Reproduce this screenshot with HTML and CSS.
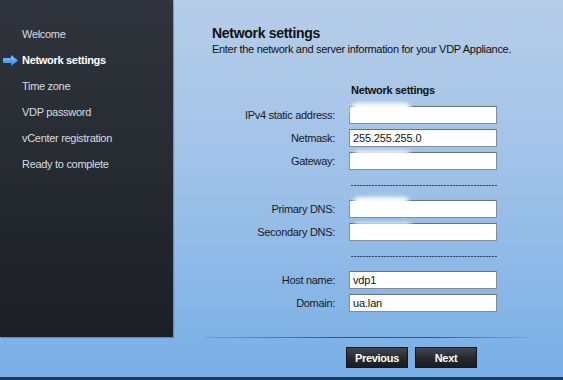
FILE: index.html
```html
<!DOCTYPE html>
<html>
<head>
<meta charset="utf-8">
<link rel="stylesheet" href="styles.css">
</head>
<body>
<div class="app">
  <div class="top">
    <nav class="sidebar">
      <div class="nav-item">Welcome</div>
      <div class="nav-item active">
        <svg class="arrow" width="15" height="11" viewBox="0 0 15 11">
          <defs>
            <linearGradient id="ag" x1="0" y1="0" x2="0" y2="1">
              <stop offset="0" stop-color="#8cc8ff"/>
              <stop offset="1" stop-color="#2f86e0"/>
            </linearGradient>
          </defs>
          <path d="M0 3 H8 V0 L15 5.5 L8 11 V8 H0 Z" fill="url(#ag)"/>
        </svg>
        Network settings
      </div>
      <div class="nav-item">Time zone</div>
      <div class="nav-item">VDP password</div>
      <div class="nav-item">vCenter registration</div>
      <div class="nav-item">Ready to complete</div>
    </nav>
    <main class="content">
      <h1 class="title">Network settings</h1>
      <p class="subtitle">Enter the network and server information for your VDP Appliance.</p>
      <div class="form">
        <div></div><div class="form-head">Network settings</div>
        <label class="lbl">IPv4 static address:</label>
        <div class="field"><input class="inp" value=""><span class="blot b1"></span></div>
        <label class="lbl">Netmask:</label>
        <div class="field"><input class="inp" value="255.255.255.0"></div>
        <label class="lbl">Gateway:</label>
        <div class="field"><input class="inp" value=""><span class="blot b2"></span></div>
        <div></div><div class="dash-row"><div class="dash"></div></div>
        <label class="lbl">Primary DNS:</label>
        <div class="field"><input class="inp" value=""><span class="blot b3"></span></div>
        <label class="lbl">Secondary DNS:</label>
        <div class="field"><input class="inp" value=""><span class="blot b4"></span></div>
        <div></div><div class="dash-row"><div class="dash"></div></div>
        <label class="lbl">Host name:</label>
        <div class="field"><input class="inp" value="vdp1"></div>
        <label class="lbl">Domain:</label>
        <div class="field"><input class="inp" value="ua.lan"></div>
      </div>
    </main>
  </div>
  <div class="sep"></div>
  <div class="footer">
    <button class="btn">Previous</button>
    <button class="btn">Next</button>
  </div>
  <div class="strip"></div>
</div>
</body>
</html>
```
FILE: styles.css
```css
html, body {
  margin: 0;
  padding: 0;
}
body {
  width: 563px;
  height: 380px;
  overflow: hidden;
  font-family: "Liberation Sans", Arial, sans-serif;
  font-size: 11px;
  letter-spacing: -0.3px;
}
.app {
  width: 563px;
  height: 380px;
  display: flex;
  flex-direction: column;
  background: linear-gradient(#b6cde8 0%, #a0c2e8 45%, #78aee6 100%);
}
.top {
  display: flex;
  height: 337px;
}
.sidebar {
  width: 173px;
  flex: none;
  height: 337px;
  box-sizing: border-box;
  padding-top: 21px;
  background: linear-gradient(#30353d, #1c1f25);
  box-shadow: 1px 1px 1px rgba(40, 60, 90, 0.35);
}
.nav-item {
  position: relative;
  height: 26px;
  line-height: 26px;
  padding-left: 22px;
  color: #d9dce0;
  font-size: 11px;
}
.nav-item.active {
  color: #ffffff;
  font-weight: bold;
}
.arrow {
  position: absolute;
  left: 3px;
  top: 8px;
}
.content {
  flex: 1;
  padding-left: 39px;
  color: #111;
}
.title {
  margin: 25px 0 0 0;
  font-size: 14px;
  line-height: 16px;
  font-weight: bold;
  color: #111;
}
.subtitle {
  margin: 2px 0 0 0;
  font-size: 11px;
  line-height: 13px;
  color: #111;
}
.form {
  margin-top: 28px;
  display: grid;
  grid-template-columns: 123px 148px;
  column-gap: 14px;
  row-gap: 5px;
  align-items: center;
}
.form-head {
  font-weight: bold;
  font-size: 11px;
  line-height: 13px;
  padding-left: 2px;
  margin-bottom: 4px;
}
.lbl {
  text-align: right;
  font-size: 11px;
  color: #1a1a1a;
}
.field {
  position: relative;
  height: 18px;
}
.inp {
  display: block;
  box-sizing: border-box;
  width: 148px;
  height: 18px;
  margin: 0;
  padding: 0 3px;
  border: 1px solid #878c93;
  border-top-color: #6c7178;
  background: #fff;
  font-family: "Liberation Sans", Arial, sans-serif;
  font-size: 11px;
  letter-spacing: -0.15px;
  color: #111;
  outline: none;
}
.blot {
  position: absolute;
  top: -3px;
  height: 14px;
  background: #fff;
  border-radius: 6px;
  filter: blur(2px);
}
.b1 { left: 2px; width: 60px; }
.b2 { left: 4px; width: 58px; top: -1px; }
.b3 { left: 4px; width: 56px; }
.b4 { left: 4px; width: 60px; top: 0; }
.dash-row {
  height: 20px;
  display: flex;
  align-items: center;
  padding-left: 2px;
}
.dash {
  width: 146px;
  height: 1px;
  background: repeating-linear-gradient(90deg, #2e4a70 0 2px, rgba(46, 74, 112, 0.35) 2px 3px);
}
.sep {
  margin-left: 205px;
  margin-right: 35px;
  height: 1px;
  background: linear-gradient(90deg, rgba(60, 85, 120, 0.2), #34506f 45%, #3c5a80 70%, rgba(60, 85, 120, 0.15));
}
.footer {
  display: flex;
  justify-content: flex-end;
  gap: 7px;
  padding-right: 86px;
  padding-top: 9px;
  height: 39px;
  box-sizing: border-box;
}
.btn {
  width: 62px;
  height: 21px;
  margin: 0;
  padding: 0;
  border: 1px solid #15171a;
  background: linear-gradient(#44474c, #25282c 55%, #1b1d20);
  color: #fff;
  font-family: "Liberation Sans", Arial, sans-serif;
  font-size: 11px;
  font-weight: bold;
  letter-spacing: -0.3px;
}
.strip {
  height: 3px;
  background: #1b3b5c;
}
```
